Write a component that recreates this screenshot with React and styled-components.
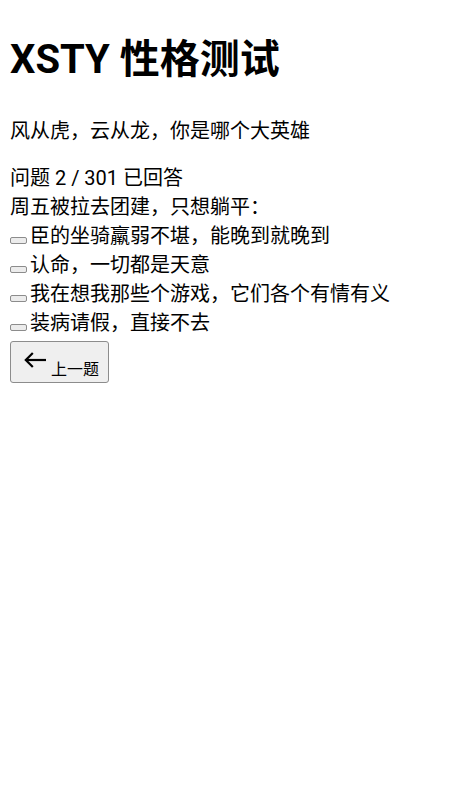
import React from "react";
import styled, { createGlobalStyle } from "styled-components";

const Global = createGlobalStyle`
  html, body { background: #fff; }
  body {
    margin: 0;
    font-family: Roboto, "Noto Sans CJK SC", sans-serif;
    font-size: 20px;
    color: #000;
  }
`;

const Page = styled.main`
  display: flow-root;
  padding: 0 10px;
`;

const Title = styled.h1`
  font-size: 40px;
  font-weight: 700;
  margin: 27px 0 30px;
`;

const Slogan = styled.p`
  margin: 0 0 18.4px;
`;

const Line = styled.div``;

const Option = styled.label`
  display: block;
  cursor: pointer;
`;

const OptionButton = styled.button`
  display: inline-block;
  box-sizing: border-box;
  width: 17px;
  height: 7px;
  margin: 0 3px -5px 0;
  padding: 0;
  border: 1px solid #8c8c8c;
  border-radius: 2px;
  background: #ececec;
  vertical-align: baseline;
`;

const Nav = styled.div`
  padding-top: 5px;
`;

const BackButton = styled.button`
  display: inline-flex;
  align-items: center;
  box-sizing: border-box;
  height: 42px;
  margin: 0;
  padding: 0 9px 0 13px;
  border: 1px solid #8c8c8c;
  border-radius: 3px;
  background: #efefef;
  font-family: Roboto, "Noto Sans CJK SC", sans-serif;
  color: #000;
`;

const ArrowIcon = styled.svg`
  display: block;
  width: 22px;
  height: 16px;
  margin-bottom: 4px;
  flex: none;
`;

const BackLabel = styled.span`
  align-self: flex-end;
  margin: 0 0 4.5px 5px;
  font-size: 16px;
  line-height: 16px;
`;

const options = [
  "臣的坐骑羸弱不堪，能晚到就晚到",
  "认命，一切都是天意",
  "我在想我那些个游戏，它们各个有情有义",
  "装病请假，直接不去",
];

export default function App() {
  return (
    <Page>
      <Global />
      <Title>XSTY 性格测试</Title>
      <Slogan>风从虎，云从龙，你是哪个大英雄</Slogan>
      <Line>问题 2 / 301 已回答</Line>
      <Line>周五被拉去团建，只想躺平：</Line>
      {options.map((o) => (
        <Option key={o}>
          <OptionButton type="button" aria-label={o} />
          {o}
        </Option>
      ))}
      <Nav>
        <BackButton type="button">
          <ArrowIcon viewBox="0 0 22 16" fill="none" stroke="#000" strokeWidth="2.2" strokeLinecap="butt" strokeLinejoin="miter">
            <path d="M1.8 8 H22" />
            <path d="M8.8 1 L1.8 8 L8.8 15" />
          </ArrowIcon>
          <BackLabel>上一题</BackLabel>
        </BackButton>
      </Nav>
    </Page>
  );
}
